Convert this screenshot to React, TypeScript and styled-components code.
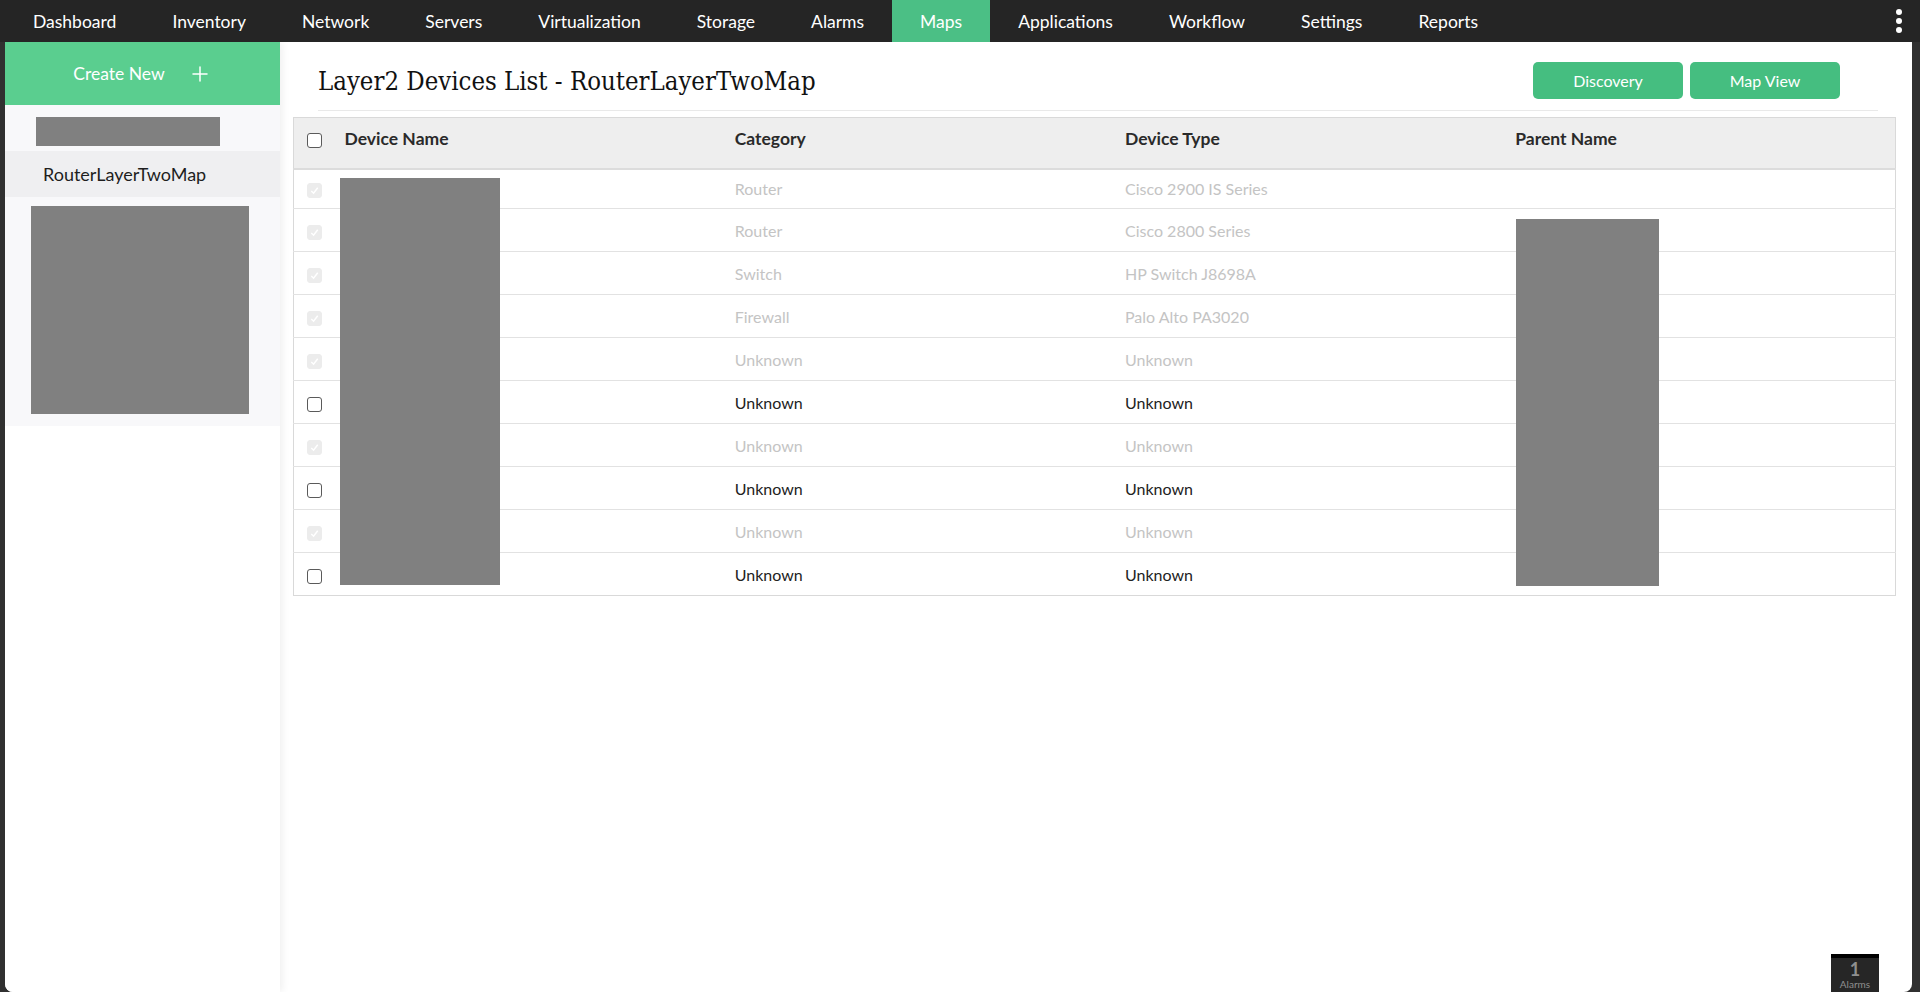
import React from 'react';
import styled, { createGlobalStyle } from 'styled-components';
import { Plus } from 'lucide-react';

const GlobalStyle = createGlobalStyle`
  html, body {
    margin: 0;
    padding: 0;
    height: 100%;
    background: #303030;
    font-family: Lato, "Open Sans", sans-serif;
  }
  #root {
    height: 100%;
  }
  * {
    box-sizing: border-box;
  }
`;

const Page = styled.div`
  height: 100vh;
  display: flex;
  flex-direction: column;
  overflow: hidden;
`;

const NavBar = styled.nav`
  height: 42px;
  flex-shrink: 0;
  background: #252525;
  display: flex;
  align-items: stretch;
  padding-left: 5px;
  position: relative;
`;

const NavItem = styled.div<{ $active?: boolean }>`
  display: flex;
  align-items: center;
  padding: 0 28px;
  color: #fff;
  font-size: 17.5px;
  background: ${p => (p.$active ? '#4bbf85' : 'transparent')};
  cursor: pointer;
`;

const MoreDots = styled.div`
  position: absolute;
  right: 18px;
  top: 9px;
  display: flex;
  flex-direction: column;
  gap: 3px;
  span {
    width: 6px;
    height: 6px;
    border-radius: 50%;
    background: #fff;
  }
`;

const Body = styled.div`
  flex: 1;
  display: flex;
  margin: 0 8px 0 5px;
  background: #fff;
  border-radius: 0 0 8px 8px;
  overflow: hidden;
  min-height: 0;
`;

const Sidebar = styled.aside`
  width: 275px;
  flex-shrink: 0;
  background: #fff;
  box-shadow: 2px 0 8px rgba(0, 0, 0, 0.07);
  position: relative;
  z-index: 1;
  display: flex;
  flex-direction: column;
`;

const CreateButton = styled.button`
  height: 63px;
  border: none;
  background: #5ace8f;
  color: #fff;
  font-family: Lato, sans-serif;
  font-size: 17.5px;
  display: flex;
  align-items: center;
  justify-content: center;
  gap: 23px;
  cursor: pointer;
  padding: 0;
`;

const MapList = styled.div`
  background: #f8f8fa;
  padding-bottom: 12px;
`;

const MapItem = styled.div<{ $selected?: boolean; $pad: string }>`
  padding: ${p => p.$pad};
  min-height: ${p => (p.$selected ? '46px' : '0')};
  background: ${p => (p.$selected ? '#efeff1' : 'transparent')};
  color: #1e1e1e;
  font-size: 18px;
  display: flex;
  align-items: center;
`;

const Redact = styled.div<{ $w: number; $h: number }>`
  width: ${p => p.$w}px;
  height: ${p => p.$h}px;
  background: #808080;
`;

const Main = styled.main`
  flex: 1;
  min-width: 0;
  padding: 0 16px 0 13px;
`;

const Header = styled.div`
  margin: 0 18px 0 25px;
  padding: 20px 38px 11px 0;
  border-bottom: 1px solid #e9e9e9;
  display: flex;
  align-items: center;
  justify-content: space-between;
`;

const Title = styled.h1`
  margin: 0;
  font-family: "DejaVu Serif Condensed", "DejaVu Serif", serif;
  font-stretch: condensed;
  font-weight: normal;
  font-size: 25.5px;
  color: #111;
`;

const Buttons = styled.div`
  display: flex;
  gap: 7px;
`;

const ActionButton = styled.button`
  width: 150px;
  height: 37px;
  border: none;
  border-radius: 5px;
  background: #45be80;
  color: #fff;
  font-family: Lato, sans-serif;
  font-size: 16px;
  cursor: pointer;
`;

const TableWrap = styled.div`
  position: relative;
  margin-top: 6px;
`;

const Table = styled.table`
  width: 100%;
  border-collapse: collapse;
  table-layout: fixed;
  border: 1px solid #d9d9d9;
`;

const HeadCell = styled.th<{ $check?: boolean }>`
  height: 51px;
  background: #eeeeee;
  border-bottom: 2px solid #dcdcdc;
  text-align: left;
  font-size: 17.5px;
  font-weight: 700;
  color: #2a2a2a;
  padding: ${p => (p.$check ? '0 0 8px 13px' : '0 10px 8px')};
  width: ${p => (p.$check ? '41px' : 'auto')};
`;

const Row = styled.tr<{ $first?: boolean }>`
  height: ${p => (p.$first ? '40px' : '43px')};
  border-bottom: 1px solid #e2e2e2;
  &:last-child {
    border-bottom: none;
  }
`;

const Cell = styled.td<{ $muted?: boolean; $check?: boolean }>`
  font-size: 16px;
  color: ${p => (p.$muted ? '#c4c4c4' : '#222')};
  padding: ${p => (p.$check ? '0 0 0 13px' : '0 10px')};
  white-space: nowrap;
`;

const Box = styled.span<{ $disabled?: boolean }>`
  display: inline-flex;
  align-items: center;
  justify-content: center;
  vertical-align: middle;
  width: 15px;
  height: 15px;
  border-radius: 3px;
  border: 1px solid ${p => (p.$disabled ? '#ececec' : '#5a5a5a')};
  background: ${p => (p.$disabled ? '#ececec' : '#fff')};
`;

const Overlay = styled.div<{ $left: number; $top: number; $w: number; $h: number }>`
  position: absolute;
  left: ${p => p.$left}px;
  top: ${p => p.$top}px;
  width: ${p => p.$w}px;
  height: ${p => p.$h}px;
  background: #808080;
`;

const AlarmBadge = styled.div`
  position: fixed;
  right: 41px;
  bottom: 0;
  width: 48px;
  height: 38px;
  background: #262626;
  border-top: 4px solid #000;
  color: #8f8f8f;
  display: flex;
  flex-direction: column;
  align-items: center;
  line-height: 1;
  padding-top: 2px;
  b {
    font-size: 18px;
    font-weight: 700;
  }
  span {
    font-size: 10px;
    margin-top: 1px;
  }
`;

const navItems = [
  'Dashboard', 'Inventory', 'Network', 'Servers', 'Virtualization', 'Storage',
  'Alarms', 'Maps', 'Applications', 'Workflow', 'Settings', 'Reports',
];

const rows = [
  { cat: 'Router', type: 'Cisco 2900 IS Series', managed: true },
  { cat: 'Router', type: 'Cisco 2800 Series', managed: true },
  { cat: 'Switch', type: 'HP Switch J8698A', managed: true },
  { cat: 'Firewall', type: 'Palo Alto PA3020', managed: true },
  { cat: 'Unknown', type: 'Unknown', managed: true },
  { cat: 'Unknown', type: 'Unknown', managed: false },
  { cat: 'Unknown', type: 'Unknown', managed: true },
  { cat: 'Unknown', type: 'Unknown', managed: false },
  { cat: 'Unknown', type: 'Unknown', managed: true },
  { cat: 'Unknown', type: 'Unknown', managed: false },
];

const Check = ({ disabled }: { disabled?: boolean }) => (
  <Box $disabled={disabled}>
    {disabled && (
      <svg width="11" height="11" viewBox="0 0 12 12">
        <path d="M2.5 6.5 L5 9 L9.5 3" fill="none" stroke="#fff" strokeWidth="1.6" />
      </svg>
    )}
  </Box>
);

export default function App() {
  return (
    <Page>
      <GlobalStyle />
      <NavBar>
        {navItems.map(n => (
          <NavItem key={n} $active={n === 'Maps'}>{n}</NavItem>
        ))}
        <MoreDots><span /><span /><span /></MoreDots>
      </NavBar>

      <Body>
        <Sidebar>
          <CreateButton>
            Create New
            <Plus size={24} strokeWidth={1.5} />
          </CreateButton>
          <MapList>
            <MapItem $pad="12px 0 5px 31px">
              <Redact $w={184} $h={29} />
            </MapItem>
            <MapItem $selected $pad="0 0 0 38px">
              RouterLayerTwoMap
            </MapItem>
            <MapItem $pad="9px 0 0 26px">
              <Redact $w={218} $h={208} />
            </MapItem>
          </MapList>
        </Sidebar>

        <Main>
          <Header>
            <Title>Layer2 Devices List - RouterLayerTwoMap</Title>
            <Buttons>
              <ActionButton>Discovery</ActionButton>
              <ActionButton>Map View</ActionButton>
            </Buttons>
          </Header>

          <TableWrap>
            <Table>
              <thead>
                <tr>
                  <HeadCell $check><Check /></HeadCell>
                  <HeadCell>Device Name</HeadCell>
                  <HeadCell>Category</HeadCell>
                  <HeadCell>Device Type</HeadCell>
                  <HeadCell>Parent Name</HeadCell>
                </tr>
              </thead>
              <tbody>
                {rows.map((r, i) => (
                  <Row key={i} $first={i === 0}>
                    <Cell $check><Check disabled={r.managed} /></Cell>
                    <Cell />
                    <Cell $muted={r.managed}>{r.cat}</Cell>
                    <Cell $muted={r.managed}>{r.type}</Cell>
                    <Cell />
                  </Row>
                ))}
              </tbody>
            </Table>
            <Overlay $left={47} $top={61} $w={160} $h={407} />
            <Overlay $left={1223} $top={102} $w={143} $h={367} />
          </TableWrap>
        </Main>
      </Body>

      <AlarmBadge>
        <b>1</b>
        <span>Alarms</span>
      </AlarmBadge>
    </Page>
  );
}
